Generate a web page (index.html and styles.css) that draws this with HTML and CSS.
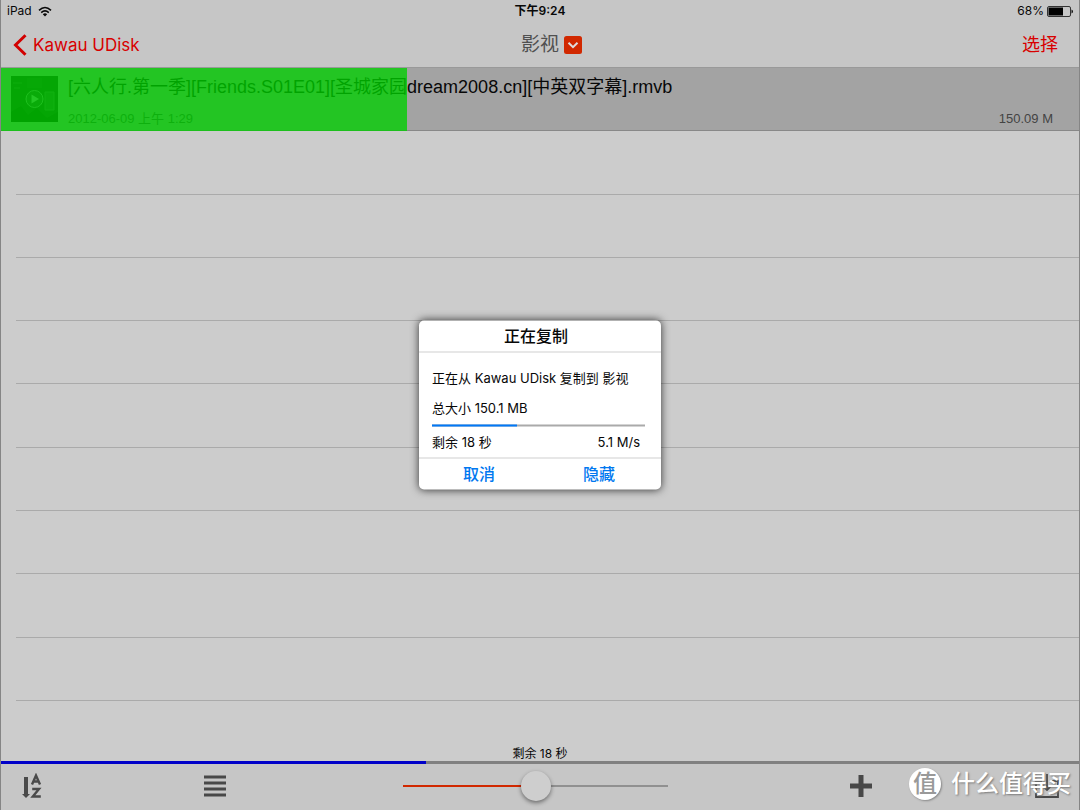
FILE: index.html
```html
<!DOCTYPE html>
<html lang="zh-CN">
<head>
<meta charset="utf-8">
<meta name="viewport" content="width=device-width, initial-scale=1">
<title>影视</title>
<link rel="stylesheet" href="styles.css">
</head>
<body>
<div class="app">
  <header class="header">
    <div class="status">
      <span class="status-left">iPad
        <svg class="wifi" viewBox="0 0 14 11" aria-hidden="true"><path d="M1 4.3Q7-1.3 13 4.3M3.2 6.6Q7 3.2 10.8 6.6" fill="none" stroke="#080808" stroke-width="1.6"/><path d="M4.8 8.2Q7 6.4 9.2 8.2L7 10.6Z" fill="#080808"/></svg>
      </span>
      <time class="clock">下午9:24</time>
      <span class="status-right">68%
        <svg class="battery" viewBox="0 0 26 11" aria-hidden="true"><rect x=".5" y=".5" width="23" height="10" rx="1.5" fill="none" stroke="#333"/><rect x="1.5" y="1.5" width="14.5" height="8" fill="#000"/><path d="M24.5 3.5Q26 4 26 5.500Q26 7 24.500 7.500Z" fill="#111"/></svg>
      </span>
    </div>
    <nav class="nav">
      <button class="nav-button back" type="button"><svg class="chevron" viewBox="0 0 14 22" aria-hidden="true"><path d="M12.500 1.200L2.500 11L12.500 20.800" fill="none" stroke="#d20000" stroke-width="3"/></svg>Kawau UDisk</button>
      <button class="nav-button title" type="button">影视<svg class="drop" viewBox="0 0 18 18" aria-hidden="true"><rect width="18" height="18" rx="2.500" fill="#d12800"/><path d="M4.500 6.800L9 11.200L13.500 6.800" fill="none" stroke="#ddd" stroke-width="2"/></svg></button>
      <button class="nav-button select" type="button">选择</button>
    </nav>
  </header>
  <main class="list">
    <article class="row file">
      <svg class="thumb" viewBox="0 0 47 46" aria-hidden="true"><rect width="47" height="46" fill="#151515"/><path d="M2 7H11M3 12H9" stroke="#3b3b3b"/><path d="M34 16H43V34H34Z" fill="#303030" stroke="#4a4a4a"/><path d="M0 36L10 30L17 39L26 32L36 42L47 36V46H0Z" fill="#060606"/><path d="M16 2H31V12H16Z" fill="#202020"/><circle cx="23.500" cy="23" r="8.500" fill="#2a2a2a" stroke="#8a8a8a"/><path d="M20.500 18.500L28 23L20.500 27.500Z" fill="#aaa"/></svg>
      <div class="file-text">
        <h1 class="file-name">[六人行.第一季][Friends.S01E01][圣城家园dream2008.cn][中英双字幕].rmvb</h1>
        <div class="file-meta"><time>2012-06-09 上午 1:29</time><span>150.09 M</span></div>
      </div>
      <div class="file-progress"></div>
    </article>
    <div class="row"></div>
    <div class="row"></div>
    <div class="row"></div>
    <div class="row"></div>
    <div class="row"></div>
    <div class="row"></div>
    <div class="row"></div>
    <div class="row"></div>
    <div class="row"></div>
    <div class="row remaining">剩余 18 秒</div>
  </main>
  <div class="total-progress"><div class="total-value"></div></div>
  <footer class="toolbar">
    <button class="tool" type="button" aria-label="排序"><svg class="sort" viewBox="0 0 22 26" aria-hidden="true"><path d="M3 4H7V21H9L5 25L1 21H3Z" fill="#4a4a4a"/><path d="M11 11.500L15 2.500L19 11.500M12.800 8.500H17.200" fill="none" stroke="#4a4a4a" stroke-width="2.400"/><path d="M11.200 16H18L11.800 23.500H19.800" fill="none" stroke="#4a4a4a" stroke-width="2.400"/></svg></button>
    <button class="tool" type="button" aria-label="列表"><svg class="lines" viewBox="0 0 22 22" aria-hidden="true"><path d="M0 2H22M0 8H22M0 14H22M0 20H22" stroke="#484848" stroke-width="3"/></svg></button>
    <input class="slider" type="range" min="0" max="100" value="50" aria-label="缩放">
    <button class="tool plus-tool" type="button" aria-label="添加"><svg class="plus" viewBox="0 0 22 22" aria-hidden="true"><path d="M11 0V22M0 11H22" stroke="#484848" stroke-width="5"/></svg></button>
    <button class="tool" type="button" aria-label="下载"><svg class="download" viewBox="0 0 24 24" aria-hidden="true"><path d="M7 7H1V23H23V7H17M12 0V16M8 12L12 16L16 12" fill="none" stroke="#484848" stroke-width="1.800"/></svg></button>
  </footer>
  <section class="dialog" role="dialog" aria-labelledby="dialog-title">
    <h2 class="dialog-title" id="dialog-title">正在复制</h2>
    <div class="dialog-body">
      <p class="line">正在从 Kawau UDisk 复制到 影视</p>
      <p class="line">总大小 150.1 MB</p>
      <div class="copy-progress"><div class="copy-value"></div></div>
      <div class="rate"><span>剩余 18 秒</span><span>5.1 M/s</span></div>
    </div>
    <div class="actions"><button class="action" type="button">取消</button><button class="action" type="button">隐藏</button></div>
  </section>
  <div class="watermark"><span class="seal">值</span><span>什么值得买</span></div>
</div>
</body>
</html>
```
FILE: styles.css
```css
* { box-sizing: border-box; }
body { margin: 0; font-family: Inter, "Noto Sans CJK SC", sans-serif; color: #080808; }
button { border: 0; padding: 0; background: none; font: inherit; color: inherit; }
svg { display: block; flex: none; }
h1, h2, p { margin: 0; }
.app { position: relative; display: flex; flex-direction: column; min-height: 100vh; background: #ccc; border-left: 1px solid #858585; border-right: 1px solid #858585; }
.header { background: #c6c6c6; border-bottom: 1px solid #999; }
.status, .nav { display: grid; grid-template-columns: 1fr auto 1fr; align-items: center; }
.status { height: 22px; padding: 0 6px; font-size: 12px; line-height: 22px; }
.status-left, .status-right { display: flex; align-items: center; gap: 6px; }
.status-right { justify-content: flex-end; gap: 3px; }
.wifi { width: 14px; height: 11px; }
.battery { width: 26px; height: 11px; }
.clock { font-weight: 600; }
.nav { height: 45px; padding: 0 12px; font-size: 18px; color: #d80000; }
.nav-button { display: flex; align-items: center; line-height: 24px; }
.back { gap: 6px; font-size: 17px; }
.chevron { width: 14px; height: 22px; }
.title { gap: 5px; padding-left: 23px; font-size: 19px; color: #505050; }
.drop { width: 18px; height: 18px; }
.select { justify-self: end; padding-right: 9px; }
.list { flex: 1; display: grid; grid-template-rows: repeat(10, 1fr) 60px; }
.row { margin-left: 15px; border-bottom: 1px solid #aaa; }
.file { position: relative; display: flex; align-items: center; gap: 10px; margin: 0; padding: 0 26px 0 10px; background: #a3a3a3; border-color: #888; font-family: "Liberation Sans", "Noto Sans CJK SC", sans-serif; }
.thumb { width: 47px; height: 46px; }
.file-text { flex: 1; display: flex; flex-direction: column; gap: 12px; padding-top: 4px; }
.file-name { font-size: 18px; font-weight: 400; line-height: 24px; white-space: nowrap; }
.file-meta { display: flex; justify-content: space-between; font-size: 13px; line-height: 16px; color: #444; }
.file-progress { position: absolute; inset: 0 auto -1px 0; width: 37.7%; background: rgba(0, 206, 0, .79); }
.remaining { display: flex; justify-content: center; align-items: flex-end; margin: 0; border: 0; font-size: 12px; line-height: 14px; }
.total-progress { height: 3px; background: #808080; }
.total-value { width: 39.4%; height: 100%; background: #0000c8; }
.toolbar { height: 46px; padding: 0 20px 2px; display: grid; grid-template-columns: 183fr 199fr 265fr 182fr 185fr 24px; align-items: center; background: #c6c6c6; }
.tool { justify-self: start; }
.plus-tool { grid-column: 5; }
.sort { width: 22px; height: 26px; }
.lines, .plus { width: 22px; height: 22px; }
.download { width: 24px; height: 24px; }
.slider { width: 100%; height: 30px; margin: 0; appearance: none; background: linear-gradient(90deg, #d12800 50%, #909090 50%) center / 100% 2px no-repeat; }
.slider::-webkit-slider-thumb { appearance: none; width: 30px; height: 30px; border-radius: 50%; background: #cecece; box-shadow: 0 2px 4px rgba(0, 0, 0, .45); }
.dialog { position: absolute; top: 50%; left: 50%; transform: translate(-50%, -50%); width: 242px; background: #fff; border-radius: 5px; box-shadow: 0 0 9px rgba(0, 0, 0, .75); font-size: 13px; }
.dialog-title { height: 32px; padding-right: 8px; border-bottom: 1px solid #d0d0d0; text-align: center; font-size: 16px; font-weight: 500; line-height: 31px; }
.dialog-body { padding: 10px 16px 6px 13px; }
.line { line-height: 30px; white-space: nowrap; }
.copy-progress { height: 2px; margin: 2px 0 5px; background: #aaa; }
.copy-value { width: 40%; height: 100%; background: #0078f8; }
.rate { display: flex; justify-content: space-between; padding-right: 5px; line-height: 20px; }
.actions { display: grid; grid-template-columns: 1fr 1fr; height: 32px; padding: 0 2px 2px 0; border-top: 1px solid #d0d0d0; }
.action { color: #0078f0; font-size: 16px; font-weight: 500; line-height: 28px; }
.watermark { position: absolute; right: 8px; bottom: 10px; display: flex; align-items: center; gap: 10px; color: #fff; font-size: 24px; font-weight: 500; line-height: 32px; text-shadow: 1px 1px 2px #777; pointer-events: none; }
.seal { width: 32px; height: 32px; border-radius: 50%; background: #fff; color: #999; text-align: center; text-shadow: none; box-shadow: 1px 1px 2px #888; }
```
